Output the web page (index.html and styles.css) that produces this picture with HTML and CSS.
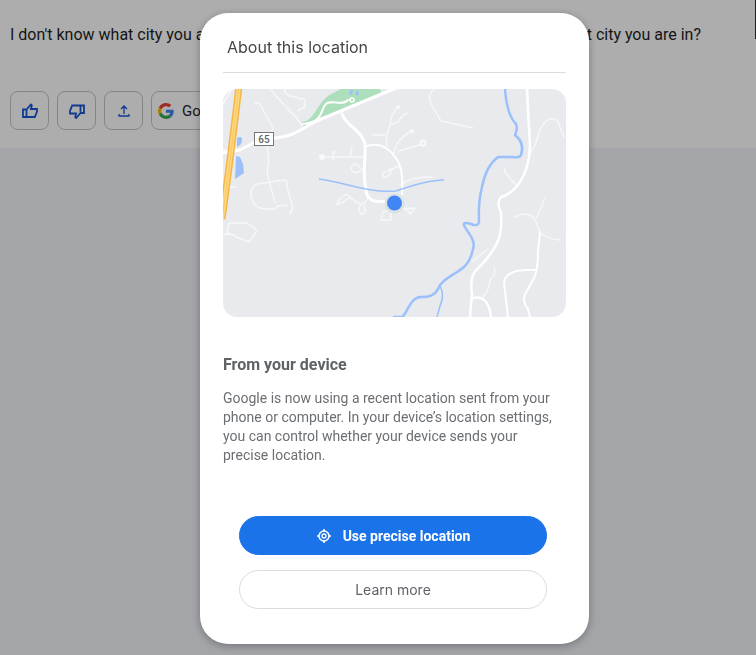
FILE: index.html
```html
<!DOCTYPE html>
<html lang="en">
<head>
<meta charset="utf-8">
<meta name="viewport" content="width=device-width, initial-scale=1">
<title>About this location</title>
<link rel="stylesheet" href="styles.css">
</head>
<body>
<main class="page">
  <section class="answer">
    <p class="answer-text"><span>I don't know what city you are in.</span><span>Can you tell me what city you are in?</span></p>
    <div class="actions">
      <button class="action" type="button" aria-label="Good response">
        <svg width="20" height="20" viewBox="0 0 20 20" fill="none" stroke="currentColor" stroke-width="1.800"><path d="M3 8.500h3.500v7.500H3zM6.500 8.500L10.800 3.500l1 .8-.9 3.700h6.100v2.500l-2.200 5.500H6.500"/></svg>
      </button>
      <button class="action" type="button" aria-label="Bad response">
        <svg width="20" height="20" viewBox="0 0 20 20" fill="none" stroke="currentColor" stroke-width="1.800"><path d="M17 12h-3.500V4.500H17zM13.500 12L9.200 17l-1-.8.900-3.700H3V10l2.200-5.500h8.300"/></svg>
      </button>
      <button class="action" type="button" aria-label="Share">
        <svg width="20" height="20" viewBox="0 0 20 20" fill="none" stroke="currentColor" stroke-width="1.300"><path d="M10 13V5.500M7 8L10 5l3 3M5 13v2h10v-2"/></svg>
      </button>
      <button class="action action-google" type="button">
        <svg width="16" height="16" viewBox="0 0 48 48"><path fill="#ea4335" d="M24 9.500c3.500 0 6.700 1.200 9.200 3.600l6.900-6.900C35.900 2.400 30.500 0 24 0 14.600 0 6.500 5.400 2.600 13.200l8 6.200C12.400 13.700 17.700 9.500 24 9.500z"/><path fill="#4285f4" d="M47 24.600c0-1.600-.2-3.100-.4-4.600H24v9h12.900c-.6 3-2.300 5.500-4.800 7.200l7.700 6C44.400 38 47 31.800 47 24.600z"/><path fill="#fbbc05" d="M10.500 28.600A14.500 14.500 0 0 1 10.500 19.400l-7.900-6.200a24 24 0 0 0 0 21.600z"/><path fill="#34a853" d="M24 48c6.500 0 11.900-2.100 15.900-5.800l-7.800-6c-2.100 1.500-4.900 2.300-8.100 2.300-6.300 0-11.600-4.200-13.500-9.900l-8 6.200C6.500 42.600 14.600 48 24 48z"/></svg>
        Google it
      </button>
    </div>
  </section>
</main>
<div class="scrim">
  <div class="dialog" role="dialog" aria-modal="true" aria-labelledby="title">
    <h1 class="title" id="title">About this location</h1>
    <svg class="map" viewBox="223 89 343 228" role="img" aria-label="Map of your approximate location">
      <rect x="223" y="89" width="343" height="228" fill="#e8eaed"/>
      <path fill="#addfbd" d="M302 122C315 121 316 103 331 94L341 89H380L382 94L303 127z"/>
      <path fill="#9bc0fa" d="M349 92q3-4 4-1l-2 5zM355 94l2-4 2 2-1 4zM237 138q5-3 5 2t-5 7zM236 156l4 1 3 7 1 9-9 6z"/>
      <g fill="none" stroke="#f6f7f9" stroke-linecap="round" stroke-linejoin="round" stroke-width="1.500">
        <path d="M223 104L229 94 232 89M223 187l13 0M223 150h16"/>
        <path d="M255 103q5-2 8 7l9 16c3 7-4 7-7 12q5 19 3 28t2 18l5 19"/>
        <path d="M271 90l15 17 10 10 7 10M284 89c5 12 10 5 14 9s7-4 7 5-5 3-7 8"/>
        <path d="M257 184l27-4q4 0 3 7l4 14q3 8-1 13M257 184q-7 3-6 12 2 12 14 13h8q4 1 4-3l10-1M227 235l2-12 17 0q7 3 11 8l-8 11-13-5q-4-5-13-2"/>
        <path d="M322 157h42M333 160v-8h4M350 156l2-8M363 168q-3 6-10 4-4-4 0-7t7 3M373 135h12M387 146q-2-10 3-20M394 154q0-12 17-23M399 151l23-7"/>
        <path d="M390 126q0-12 8-19M391 124q6 0 9-5t8-6M400 165l-9 5q-10 2-8 6t8-3l-1-5M368 198q-4 8-10 5t-9-7-9 3-1 5 10-6M362 203q-6 8 0 11 5 1 2-9M403 209l12-1-5 6-4-6M391 210l-8 2-2 8h10v-7M400 185q12-9 32-8"/>
        <path d="M434 89q-7 6-3 15 6 10 10 17l32 7"/>
        <path d="M530 153q5-5 8-17 7-22 19-16l7 17M504 168q2 9 14 18M473 261l15-12M494 267q3 7-4 13 0 8-7 17M515 217q12-7 20 2l5 14q8 6 20 7M537 217l8-19"/>
      </g>
      <circle cx="423" cy="143" r="2.500" fill="none" stroke="#f8f9fa" stroke-width="2"/>
      <g fill="#f8f9fa"><circle cx="322" cy="157" r="3"/><circle cx="398" cy="107" r="2"/><circle cx="412" cy="131" r="2"/></g>
      <g fill="none" stroke="#fff" stroke-linecap="round" stroke-linejoin="round">
        <path stroke-width="3" d="M222 153l18-3 15-8M274 138c24-2 28-11 45-18l24-10 53-22M342 114c5 13 19 15 23 30 1 12-3 31 1 45q0 9 8 12l18 1"/>
        <path stroke-width="2" d="M303 124c20-2 17-12 22-19s17 2 23-5"/>
        <path stroke-width="2" d="M367 146q17-5 29 12 8 12 6 36"/>
        <path stroke-width="2.500" d="M527 89l3 58q-1 22-10 35t-19 15q-5 6 0 16 2 21-6 34t-17 21-6 26l-2 23M473 298q15-4 18 19"/>
        <path stroke-width="2" d="M508 317l-4-34q1-12 21-13h11M540 232l-2 20q0 18-4 26t-9 16q-3 8 3 15l3 12"/>
      </g>
      <circle cx="352" cy="100" r="2" fill="#addfbd" stroke="#fff" stroke-width="1.500"/>
      <g fill="none" stroke="#9bc0fa" stroke-linejoin="round">
        <path stroke-width="1.500" d="M319 179c25 3 47 14 77 12 20-7 34-11 48-11M440 286q5 9 0 20l-3 11"/>
        <path stroke-width="2.500" d="M505 89c1 14 4 28 11 35q2 4-1 11 10 8 6 20-1 3-8 2h-15q-12 9-16 30-4 15-3 35-1 5-8 2c-6-2-9-1-6 3 4 7 11 14 8 22-5 25-22 22-33 36-5 13-14 12-20 12-10 1-13 17-18 20H393"/>
      </g>
      <path d="M239 86C234 128 229 171 222 219" fill="none" stroke="#f4b544" stroke-width="7"/>
      <path d="M239 86C234 128 229 171 222 219" fill="none" stroke="#ffd982" stroke-width="4"/>
      <path d="M239 86C234 128 229 171 222 219" fill="none" stroke="#f9c65d" stroke-width="1"/>
      <rect x="254.500" y="132.500" width="19" height="13" fill="#fff" stroke="#757575"/>
      <text x="264" y="143" class="road">65</text>
      <circle cx="394.500" cy="203.500" r="10" fill="#d9e3e3"/>
      <circle cx="394.500" cy="203" r="7.500" fill="#4285f4"/>
    </svg>
    <h2 class="subtitle">From your device</h2>
    <p class="details">Google is now using a recent location sent from your phone or computer. In your device’s location settings, you can control whether your device sends your precise location.</p>
    <div class="buttons">
      <button class="button primary" type="button">
        <svg width="16" height="16" viewBox="0 0 16 16" fill="none" stroke="currentColor"><circle cx="8" cy="8" r="5" stroke-width="1.500"/><circle cx="8" cy="8" r="2" stroke-width="1.300"/><path stroke-width="1.600" d="M8 1v2.500M8 12.500V15M1 8h2.500M12.500 8H15"/></svg>
        Use precise location
      </button>
      <button class="button" type="button">Learn more</button>
    </div>
  </div>
</div>
<div class="edge"></div>
</body>
</html>
```
FILE: styles.css
```css
* { box-sizing: border-box; }

body {
  margin: 0;
  min-height: 100vh;
  background: #f0f3f9;
  color: #1f1f1f;
  font-family: Roboto, "Liberation Sans", sans-serif;
}

button { font: inherit; }

.answer {
  padding: 25px 55px 18px 10px;
  background: #fff;
}

.answer-text {
  display: flex;
  justify-content: space-between;
  margin: 0 0 46px;
  font-size: 16px;
  font-weight: 400;
  line-height: 20px;
  white-space: nowrap;
}

.actions {
  display: flex;
  gap: 8px;
}

.action {
  display: flex;
  align-items: center;
  justify-content: center;
  width: 39px;
  height: 39px;
  padding: 0;
  border: 1px solid #c4c7c5;
  border-radius: 8px;
  background: transparent;
  color: #1a56d6;
}

.action-google {
  justify-content: flex-start;
  gap: 8px;
  width: 110px;
  padding-left: 6px;
  color: #1f1f1f;
  font-size: 15px;
}

.scrim {
  position: fixed;
  inset: 0;
  display: flex;
  align-items: flex-start;
  justify-content: center;
  padding: 13px 0 11px 33px;
  overflow: auto;
  background: rgba(0, 0, 0, 0.32);
}

.dialog {
  width: 100%;
  max-width: 389px;
  padding: 16px 23px 35px;
  border-radius: 28px;
  background: #fff;
  box-shadow: 0 2px 8px rgba(0, 0, 0, 0.3);
  color: #5f6368;
}

.title {
  margin: 0 0 16px;
  padding: 8px 4px 15px;
  border-bottom: 1px solid #dadce0;
  color: #444746;
  font-family: Inter, Roboto, sans-serif;
  font-size: 16px;
  font-weight: 400;
  line-height: 20px;
}

.map {
  display: block;
  width: 100%;
  border-radius: 14px;
}

.road {
  fill: #5f6368;
  font-size: 10px;
  font-weight: 500;
  text-anchor: middle;
}

.subtitle {
  margin: 38px 0 14px;
  font-size: 16px;
  font-weight: 700;
  line-height: 20px;
}

.details {
  margin: 0 0 51px;
  color: #6b6f73;
  font-size: 14px;
  line-height: 19px;
}

.buttons {
  display: grid;
  gap: 15px;
  padding: 0 19px 0 16px;
}

.button {
  display: flex;
  align-items: center;
  justify-content: center;
  gap: 11px;
  height: 39px;
  padding: 0 16px;
  border: 1px solid #dadce0;
  border-radius: 20px;
  background: #fff;
  color: #5f6368;
  font-family: Inter, Roboto, sans-serif;
  font-size: 14px;
  font-weight: 400;
}

.primary {
  border-color: #1a73e8;
  background: #1a73e8;
  color: #fff;
  font-family: Roboto, sans-serif;
  font-weight: 700;
}

.edge {
  position: fixed;
  top: 0;
  right: 0;
  width: 1px;
  height: 39px;
  background: #1f1f1f;
}
```
